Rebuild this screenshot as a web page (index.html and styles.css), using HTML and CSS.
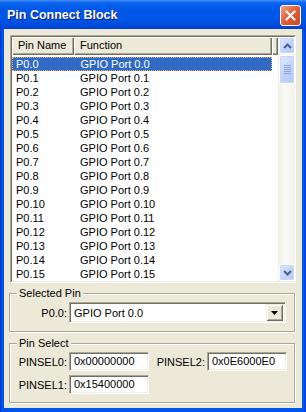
FILE: index.html
```html
<!DOCTYPE html>
<html lang="en">
<head>
  <meta charset="UTF-8" />
  <title>Pin Connect Block</title>
  <link rel="stylesheet" href="styles.css">
</head>
<body>
  <div class="window">
    <div class="titlebar">
      <span class="title">Pin Connect Block</span>
      <button class="close" aria-label="Close">
        <svg width="11" height="11" viewBox="0 0 11 11"><path d="M1.5 1.5 L9.5 9.5 M9.5 1.5 L1.5 9.5" stroke="#fff" stroke-width="2" fill="none" stroke-linecap="square"/></svg>
      </button>
    </div>

    <div class="client">
      <div class="listview">
        <div class="lv-inner">
          <div class="lv-main">
            <div class="lv-header">
              <div class="hd c1">Pin Name</div>
              <div class="hd c2">Function</div>
              <div class="hd rest"></div>
            </div>
            <div class="lv-rows">
              <div class="row selected"><span class="c1">P0.0</span><span class="c2">GPIO Port 0.0</span></div>
              <div class="row"><span class="c1">P0.1</span><span class="c2">GPIO Port 0.1</span></div>
              <div class="row"><span class="c1">P0.2</span><span class="c2">GPIO Port 0.2</span></div>
              <div class="row"><span class="c1">P0.3</span><span class="c2">GPIO Port 0.3</span></div>
              <div class="row"><span class="c1">P0.4</span><span class="c2">GPIO Port 0.4</span></div>
              <div class="row"><span class="c1">P0.5</span><span class="c2">GPIO Port 0.5</span></div>
              <div class="row"><span class="c1">P0.6</span><span class="c2">GPIO Port 0.6</span></div>
              <div class="row"><span class="c1">P0.7</span><span class="c2">GPIO Port 0.7</span></div>
              <div class="row"><span class="c1">P0.8</span><span class="c2">GPIO Port 0.8</span></div>
              <div class="row"><span class="c1">P0.9</span><span class="c2">GPIO Port 0.9</span></div>
              <div class="row"><span class="c1">P0.10</span><span class="c2">GPIO Port 0.10</span></div>
              <div class="row"><span class="c1">P0.11</span><span class="c2">GPIO Port 0.11</span></div>
              <div class="row"><span class="c1">P0.12</span><span class="c2">GPIO Port 0.12</span></div>
              <div class="row"><span class="c1">P0.13</span><span class="c2">GPIO Port 0.13</span></div>
              <div class="row"><span class="c1">P0.14</span><span class="c2">GPIO Port 0.14</span></div>
              <div class="row"><span class="c1">P0.15</span><span class="c2">GPIO Port 0.15</span></div>
            </div>
          </div>
          <div class="vscroll">
            <div class="sb-btn">
              <svg width="9" height="6" viewBox="0 0 9 6"><path d="M1 5 L4.5 1.5 L8 5" stroke="#4D6185" stroke-width="2" fill="none"/></svg>
            </div>
            <div class="sb-thumb">
              <svg width="7" height="9" viewBox="0 0 7 9"><path d="M0 0.5h7M0 2.5h7M0 4.5h7M0 6.5h7M0 8.5h7" stroke="#8CA4E8" stroke-width="1"/></svg>
            </div>
            <div class="sb-track"></div>
            <div class="sb-btn">
              <svg width="9" height="6" viewBox="0 0 9 6"><path d="M1 1 L4.5 4.5 L8 1" stroke="#4D6185" stroke-width="2" fill="none"/></svg>
            </div>
          </div>
        </div>
      </div>

      <fieldset class="group sel-group">
        <legend>Selected Pin</legend>
        <div class="sel-row">
          <label class="lbl">P0.0:</label>
          <div class="combo">
            <span class="combo-text">GPIO Port 0.0</span>
            <span class="combo-btn">
              <svg width="7" height="4" viewBox="0 0 7 4"><path d="M0 0h7L3.5 4z" fill="#000"/></svg>
            </span>
          </div>
        </div>
      </fieldset>

      <fieldset class="group pin-group">
        <legend>Pin Select</legend>
        <div class="pin-grid">
          <label class="lbl">PINSEL0:</label>
          <div class="edit">0x00000000</div>
          <label class="lbl">PINSEL2:</label>
          <div class="edit">0x0E6000E0</div>
          <label class="lbl">PINSEL1:</label>
          <div class="edit">0x15400000</div>
        </div>
      </fieldset>
    </div>
  </div>
</body>
</html>
```

FILE: styles.css
```css
body {
  margin: 0;
  font-family: "Liberation Sans", Arial, sans-serif;
  font-size: 11px;
  color: #000;
}
.window {
  width: 306px;
  height: 412px;
  box-sizing: border-box;
  display: flex;
  flex-direction: column;
  background: linear-gradient(to right, #0831D9 0, #0055EA 2px, #0055EA 304px, #0831D9 306px);
}
.titlebar {
  height: 29px;
  flex: none;
  display: flex;
  align-items: center;
  justify-content: space-between;
  padding: 0 5px 0 7px;
  background: linear-gradient(to bottom, #3D8FF6 0, #0A62EC 3px, #0058E8 10px, #0055E5 20px, #0049DA 26px, #0040CC 29px);
}
.title {
  color: #fff;
  font-weight: bold;
  font-size: 12.5px;
  text-shadow: 1px 1px #0A1883;
  padding-top: 1px;
}
.close {
  width: 21px;
  height: 21px;
  padding: 0;
  border: 1px solid #fff;
  border-radius: 3px;
  background: linear-gradient(135deg, #F2A48A 0, #E2613B 45%, #CC4420 100%);
  display: flex;
  align-items: center;
  justify-content: center;
  margin-top: 1px;
}
.client {
  flex: 1;
  margin: 0 4px 4px;
  background: #ECE9D8;
  padding: 6px 5px 4px;
  display: flex;
  flex-direction: column;
}
.listview {
  margin: 0 1px;
  height: 248px;
  box-sizing: border-box;
  border: 1px solid;
  border-color: #ACA899 #fff #fff #ACA899;
  flex: none;
}
.lv-inner {
  height: 100%;
  box-sizing: border-box;
  border: 1px solid;
  border-color: #716F64 #F1EFE2 #F1EFE2 #716F64;
  background: #fff;
  display: flex;
}
.lv-main {
  flex: 1;
  display: flex;
  flex-direction: column;
}
.lv-header {
  display: flex;
  height: 18px;
  flex: none;
}
.hd {
  box-sizing: border-box;
  background: #ECE9D8;
  line-height: 17px;
  padding-left: 6px;
  box-shadow: inset 1px 1px #fff, inset -1px -1px #716F64, inset -2px -2px #ACA899;
}
.hd.c1 { width: 62px; }
.hd.c2 { width: 198px; }
.hd.rest { flex: 1; }
.lv-rows {
  padding-top: 2px;
}
.row {
  display: flex;
  width: 260px;
  height: 14px;
  line-height: 14px;
  box-sizing: border-box;
}
.row .c1 { width: 62px; padding-left: 4px; box-sizing: border-box; }
.row .c2 { width: 198px; padding-left: 6px; box-sizing: border-box; }
.row.selected {
  background: #316AC5;
  color: #fff;
  border: 1px dotted #F0B050;
  line-height: 12px;
}
.row.selected .c1 { padding-left: 3px; }
.vscroll {
  width: 17px;
  flex: none;
  display: flex;
  flex-direction: column;
  background: linear-gradient(to right, #EEEDE5 0, #FAFAF6 40%, #F3F1EA 100%);
}
.sb-btn, .sb-thumb {
  box-sizing: border-box;
  border: 1px solid #fff;
  background: linear-gradient(135deg, #E0E9FE 0, #C4D5FC 50%, #B4C8F6 100%);
  border-radius: 2px;
  box-shadow: inset 0 0 0 1px #C8D6FB;
  display: flex;
  align-items: center;
  justify-content: center;
  margin: 0 0 0 1px;
}
.sb-btn { height: 17px; }
.sb-thumb { height: 29px; margin-top: 1px; }
.sb-track { flex: 1; }
.group {
  margin: 0;
  border: 1px solid #ACA899;
  box-shadow: 1px 1px #fff, inset 1px 1px #fff;
  width: 286px;
  box-sizing: border-box;
  padding: 2px 8px 8px 0;
  min-width: 0;
}
.group legend {
  padding: 0 2px;
  margin-left: 7px;
  line-height: 13px;
  background: #ECE9D8;
}
.sel-group { margin-top: 4px; }
.pin-group { margin-top: 5px; }
.sel-row {
  display: grid;
  grid-template-columns: 57px 1fr;
  column-gap: 2px;
  align-items: center;
}
.lbl {
  text-align: right;
}
.combo {
  height: 21px;
  box-sizing: border-box;
  border: 1px solid;
  border-color: #ACA899 #fff #fff #ACA899;
  box-shadow: inset 1px 1px #716F64, inset -1px -1px #F1EFE2;
  background: #fff;
  display: flex;
  align-items: center;
  justify-content: space-between;
  padding: 0 2px 0 4px;
}
.combo-btn {
  width: 17px;
  height: 17px;
  box-sizing: border-box;
  background: #ECE9D8;
  box-shadow: inset 1px 1px #F1EFE2, inset -1px -1px #716F64, inset 2px 2px #fff, inset -2px -2px #ACA899;
  display: flex;
  align-items: center;
  justify-content: center;
}
.pin-grid {
  display: grid;
  grid-template-columns: 57px 80px 54px 80px;
  column-gap: 2px;
  row-gap: 4px;
  align-items: center;
}
.edit {
  height: 19px;
  line-height: 17px;
  box-sizing: border-box;
  border: 1px solid;
  border-color: #ACA899 #fff #fff #ACA899;
  box-shadow: inset 1px 1px #716F64, inset -1px -1px #F1EFE2;
  background: #fff;
  padding-left: 4px;
}
```
